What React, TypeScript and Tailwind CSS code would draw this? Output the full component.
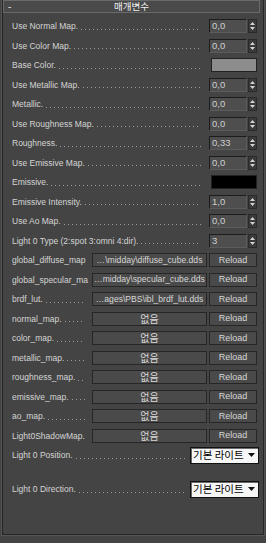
import React from "react";

const KR = "font-['Noto_Sans_CJK_KR','Noto_Sans',sans-serif]";

function Dots({ className = "" }: { className?: string }) {
  return (
    <div
      className={`flex-1 h-px mt-[6px] ml-[3px] bg-[linear-gradient(to_right,#9c9c9c_1px,transparent_1px)] bg-[length:4px_1px] bg-repeat-x ${className}`}
    />
  );
}

function Label({ text, dotsClass = "" }: { text: string; dotsClass?: string }) {
  return (
    <div className="flex flex-1 items-center min-w-0">
      <span className="whitespace-nowrap leading-[10px]">{text}.</span>
      <Dots className={dotsClass} />
    </div>
  );
}

function Arrows() {
  return (
    <div className="ml-[1px] w-[9px] h-[14px] bg-[#3a3a3a] border border-[#2a2a2a] flex items-center justify-center">
      <svg width="7" height="12" viewBox="0 0 7 12">
        <polygon points="1,5 3.5,2 6,5" fill="#d4d4d4" />
        <polygon points="1,7 3.5,10 6,7" fill="#d4d4d4" />
      </svg>
    </div>
  );
}

function SpinnerRow({ label, value }: { label: string; value: string }) {
  return (
    <div className="h-[19.5px] flex items-center pl-[9px] pr-[6px]">
      <Label text={label} dotsClass="mr-[8px]" />
      <div className="w-[38px] h-[14px] bg-[#4e4e4e] border-t border-l border-t-[#1c1c1c] border-l-[#1c1c1c] border-b border-r border-b-[#5c5c5c] border-r-[#5c5c5c] flex items-center pl-[2px] text-[9.5px] text-[#cfcfcf] leading-none">
        {value}
      </div>
      <Arrows />
    </div>
  );
}

function ColorRow({ label, color }: { label: string; color: string }) {
  return (
    <div className="h-[19.5px] flex items-center pl-[9px] pr-[6px]">
      <Label text={label} dotsClass="mr-[9px]" />
      <div className={`w-[46px] h-[14px] border border-[#222222] ${color}`} />
    </div>
  );
}

function FileRow({
  label,
  value,
  dots = true,
  kr = false,
}: {
  label: string;
  value: string;
  dots?: boolean;
  kr?: boolean;
}) {
  return (
    <div className="h-[19.5px] flex items-center pl-[9px] pr-[6px]">
      <div className="w-[77px] mr-[3px] flex items-center">
        <span className="whitespace-nowrap leading-[10px]">
          {label}
          {dots ? "." : ""}
        </span>
        {dots && <Dots className="mr-[4px]" />}
      </div>
      <div
        className={`w-[115px] h-[14px] bg-[#4a4a4a] border border-[#262626] flex items-center justify-center whitespace-nowrap text-[#d6d6d6] leading-none ${
          kr ? `${KR} text-[10px]` : "text-[8.6px]"
        }`}
      >
        {value}
      </div>
      <div className="ml-[2px] w-[48px] h-[14px] bg-[#4a4a4a] border border-[#262626] flex items-center justify-center text-[9px] text-[#d6d6d6] leading-none">
        Reload
      </div>
    </div>
  );
}

function DropRow({ label, className = "" }: { label: string; className?: string }) {
  return (
    <div className={`h-[20px] flex items-center pl-[9px] pr-[4px] ${className}`}>
      <Label text={label} dotsClass="mr-[5px]" />
      <div className="w-[69px] h-[17px] bg-[#f6f6f6] border border-[#111111] shadow-[inset_1px_1px_0_#6a6a6a] flex items-center pl-[2px] pr-[3px]">
        <span className={`${KR} text-[10.5px] text-black leading-none flex-1 whitespace-nowrap`}>
          기본 라이트
        </span>
        <svg width="7" height="4" viewBox="0 0 7 4">
          <polygon points="0,0 7,0 3.5,4" fill="#111111" />
        </svg>
      </div>
    </div>
  );
}

export default function App() {
  return (
    <div className="w-[266px] h-[543px] bg-[#444444] overflow-hidden font-['Liberation_Sans',Arial,sans-serif] text-[8.5px] text-[#d4d4d4]">
      <div className="ml-[1px] mt-[5px] w-[264px] h-[536px] border-l border-r border-b border-[#555555]">
        <div className="w-[262px] h-[535px] border-l border-r border-b border-[#262626]">
          <div className="-mt-[5px] w-[257px] h-[13px] bg-[#4a4a4a] border border-[#6a6a6a] grid grid-cols-[20px_1fr_20px] items-center">
            <span className="pl-[4px] text-[10px] leading-[11px] text-[#e6e6e6]">-</span>
            <span className={`${KR} text-center text-[9.5px] leading-[11px] text-[#f0f0f0]`}>
              매개변수
            </span>
            <span />
          </div>
          <div className="pt-[3.25px] flex flex-col">
            <SpinnerRow label="Use Normal Map" value="0,0" />
            <SpinnerRow label="Use Color Map" value="0,0" />
            <ColorRow label="Base Color" color="bg-[#8c8c8c]" />
            <SpinnerRow label="Use Metallic Map" value="0,0" />
            <SpinnerRow label="Metallic" value="0,0" />
            <SpinnerRow label="Use Roughness Map" value="0,0" />
            <SpinnerRow label="Roughness" value="0,33" />
            <SpinnerRow label="Use Emissive Map" value="0,0" />
            <ColorRow label="Emissive" color="bg-[#000000]" />
            <SpinnerRow label="Emissive Intensity" value="1,0" />
            <SpinnerRow label="Use Ao Map" value="0,0" />
            <SpinnerRow label="Light 0 Type (2:spot 3:omni 4:dir)" value="3" />
            <FileRow label="global_diffuse_map" value={"…\\midday\\diffuse_cube.dds"} dots={false} />
            <FileRow label="global_specular_ma" value={"…midday\\specular_cube.dds"} dots={false} />
            <FileRow label="brdf_lut" value={"…ages\\PBS\\ibl_brdf_lut.dds"} />
            <FileRow label="normal_map" value="없음" kr />
            <FileRow label="color_map" value="없음" kr />
            <FileRow label="metallic_map" value="없음" kr />
            <FileRow label="roughness_map" value="없음" kr />
            <FileRow label="emissive_map" value="없음" kr />
            <FileRow label="ao_map" value="없음" kr />
            <FileRow label="Light0ShadowMap" value="없음" kr />
            <DropRow label="Light 0 Position" />
            <DropRow label="Light 0 Direction" className="mt-[14px]" />
          </div>
        </div>
      </div>
    </div>
  );
}
